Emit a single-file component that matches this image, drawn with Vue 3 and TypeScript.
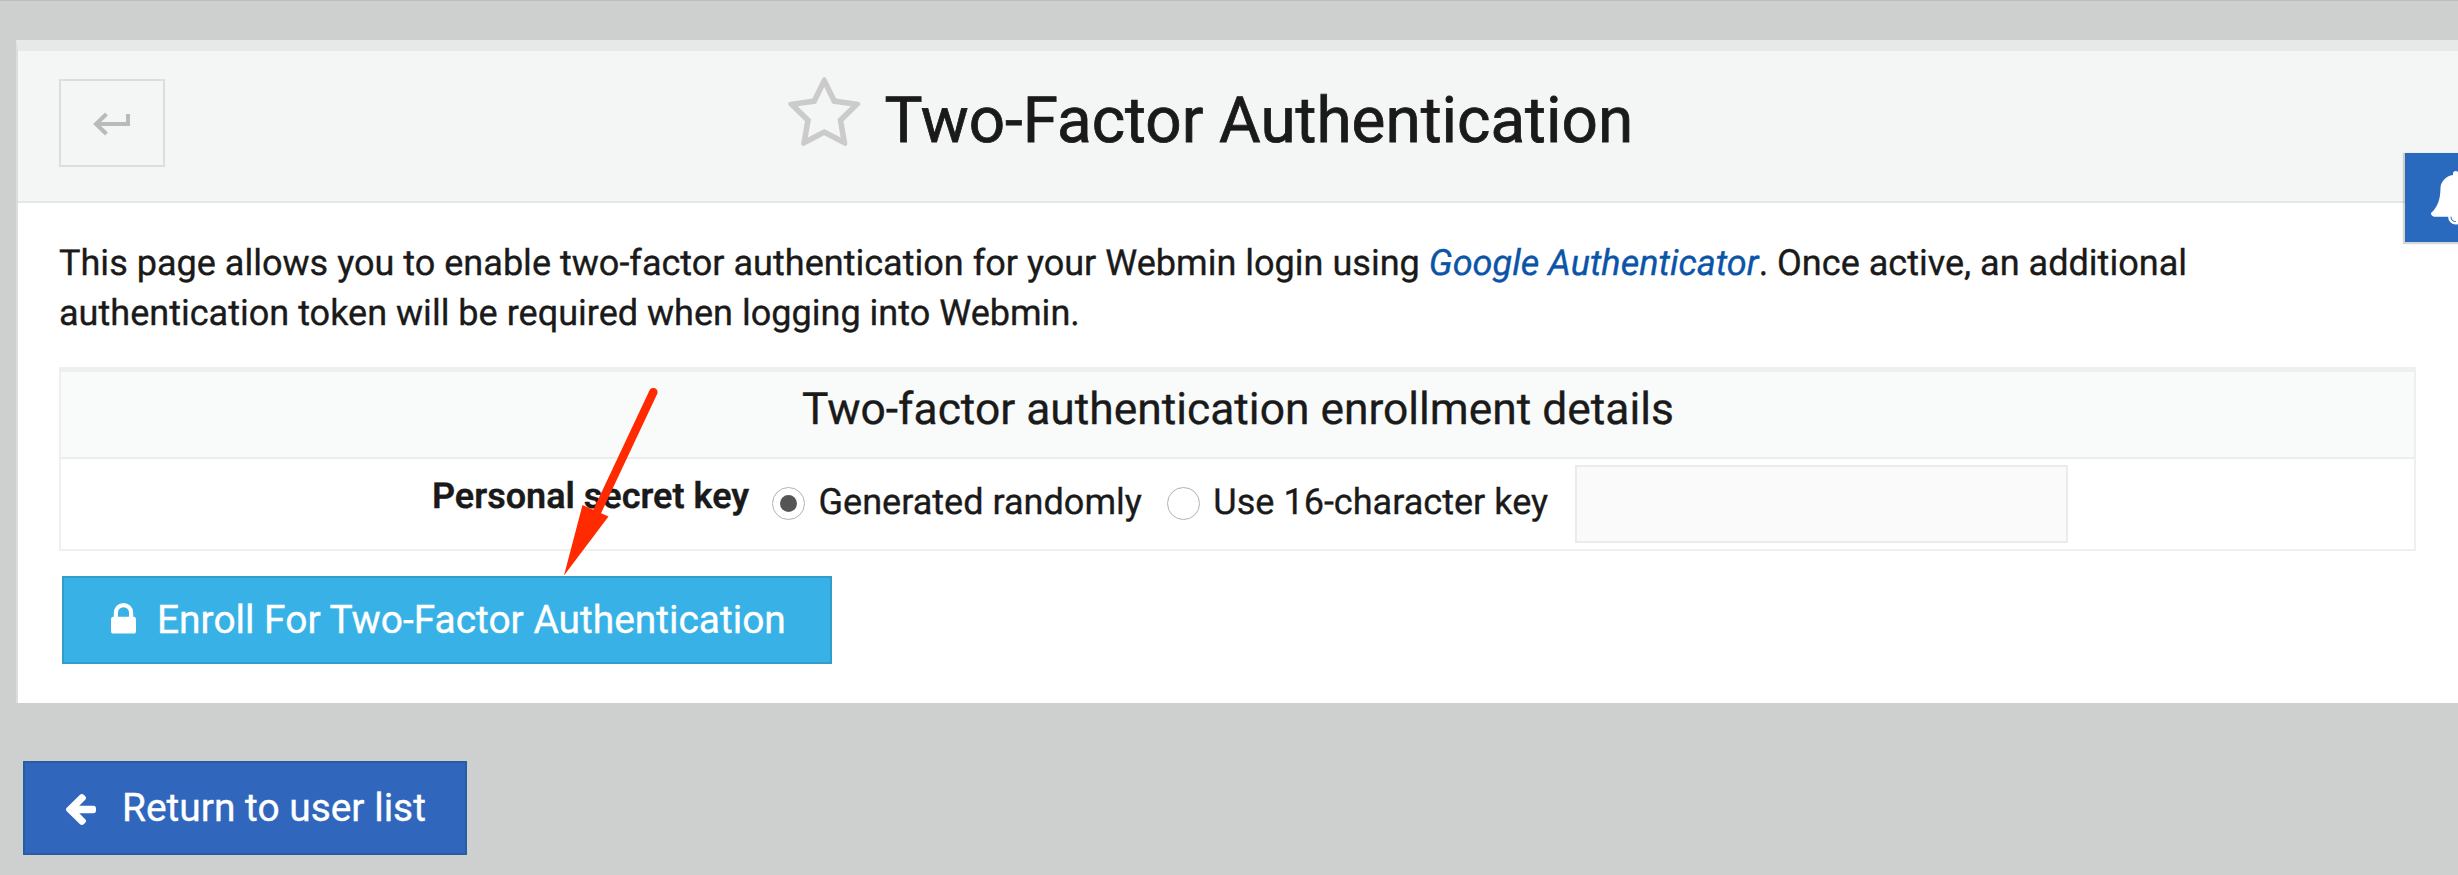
<script setup lang="ts">
import { ref } from 'vue'

type KeyMode = 'random' | 'custom'

const mode = ref<KeyMode>('random')
const secret = ref('')
const options: { value: KeyMode; label: string }[] = [
  { value: 'random', label: 'Generated randomly' },
  { value: 'custom', label: 'Use 16-character key' },
]
</script>

<template>
  <div class="page">
    <main class="panel">
      <header class="panel-head">
        <button class="back" type="button" aria-label="Back">
          <svg width="38" height="24" viewBox="0 0 38 24">
            <path d="M13.5 2 3 12l10.500 10M3 12h32V2" fill="none" stroke="#b9baba" stroke-width="4" />
          </svg>
        </button>
        <h1 class="title">
          <svg class="star" width="72.500" height="69" viewBox="64 32 1664 1587">
            <path d="M1201 1004l306-297-422-62-189-382-189 382-422 62 306 297-73 421 378-199 377 199zm527-357q0 22-26 48l-363 354 86 500q1 7 1 20 0 50-41 50-19 0-40-12l-449-236-449 236q-22 12-40 12-21 0-31.500-14.500t-10.500-35.500q0-6 2-20l86-500-364-354q-25-27-25-48 0-37 56-46l502-73 225-455q19-41 49-41t49 41l225 455 502 73q56 9 56 46z" fill="#cbcbcb" />
          </svg>
          <span>Two-Factor Authentication</span>
        </h1>
      </header>

      <section class="panel-body">
        <p class="intro">
          This page allows you to enable two-factor authentication for your Webmin login using
          <a class="link">Google Authenticator</a>. Once active, an additional<br />
          authentication token will be required when logging into Webmin.
        </p>

        <div class="details">
          <h2 class="details-head">Two-factor authentication enrollment details</h2>
          <div class="details-row">
            <span class="label">Personal secret key</span>
            <div class="choices">
              <label v-for="o in options" :key="o.value" class="choice">
                <input v-model="mode" class="native" type="radio" name="mode" :value="o.value" />
                <i class="dot" :class="{ on: mode === o.value }"></i>
                <span>{{ o.label }}</span>
              </label>
            </div>
            <input v-model="secret" class="key" type="text" />
          </div>
        </div>

        <button class="btn enroll" type="button">
          <svg width="25" height="30.500" viewBox="320 128 1152 1408">
            <path d="M640 768h512v-192q0-106-75-181t-181-75-181 75-75 181v192zm832 96v576q0 40-28 68t-68 28h-960q-40 0-68-28t-28-68v-576q0-40 28-68t68-28h32v-192q0-184 132-316t316-132 316 132 132 316v192h32q40 0 68 28t28 68z" fill="#fff" />
          </svg>
          <span>Enroll For Two-Factor Authentication</span>
        </button>
      </section>
    </main>

    <button class="btn return" type="button">
      <svg width="30" height="31" viewBox="192 181 1472 1558" preserveAspectRatio="none">
        <path d="M1664 896v128q0 53-32.500 90.500t-84.500 37.500h-704l293 294q38 36 38 90t-38 90l-75 76q-37 37-90 37-52 0-91-37l-651-652q-37-37-37-90 0-52 37-91l651-650q38-38 91-38 52 0 90 38l75 74q38 38 38 91t-38 91l-293 293h704q52 0 84.500 37.500t32.500 90.500z" fill="#fff" />
      </svg>
      <span>Return to user list</span>
    </button>

    <div class="notify">
      <svg width="53.500" height="53.500" viewBox="0 0 1792 1792">
        <path d="M912 1696q0-16-16-16-59 0-101.500-42.500t-42.500-101.500q0-16-16-16t-16 16q0 73 51.500 124.500t124.500 51.500q16 0 16-16zm816-288q0 52-38 90t-90 38h-448q0 106-75 181t-181 75-181-75-75-181h-448q-52 0-90-38t-38-90q50-42 91-88t85-119.500 74.500-158.500 50-206 19.500-260q0-152 117-282.500t307-158.500q-8-19-8-39 0-40 28-68t68-28 68 28 28 68q0 20-8 39 190 28 307 158.500t117 282.500q0 139 19.500 260t50 206 74.500 158.500 85 119.500 91 88z" fill="#fff" />
      </svg>
    </div>

    <svg class="pointer" width="100" height="190" viewBox="560 388 100 190">
      <path d="M653.300 392.200 596 514" stroke="#ff2a00" stroke-width="8.500" stroke-linecap="round" />
      <path d="M564 575.500 582.500 505l26 11.500z" fill="#ff2a00" />
    </svg>
  </div>
</template>

<style>
body {
  margin: 0;
  overflow: hidden;
}
</style>

<style scoped>
.page {
  position: relative;
  box-sizing: border-box;
  width: 2458px;
  height: 875px;
  padding-top: 39px;
  overflow: hidden;
  background: #ced0cf;
  border-top: 1px solid #bcbdbd;
  color: #1a1a1a;
  font-family: Roboto, "Liberation Sans", sans-serif;
  font-size: 36.05px;
  text-rendering: geometricPrecision;
  -webkit-text-stroke: 0.35px currentColor;
}
.panel {
  box-sizing: border-box;
  width: 2462px;
  height: 663px;
  margin-left: 16px;
  background: #fff;
  border-top: 11px solid #e8e8e8;
  border-left: 2px solid #dcdddc;
}
.panel-head {
  display: flex;
  box-sizing: border-box;
  height: 152px;
  padding: 28px 0 0 41px;
  background: #f4f6f5;
  border-bottom: 2px solid #e5e6e6;
}
.back {
  display: flex;
  align-items: center;
  justify-content: center;
  box-sizing: border-box;
  width: 106px;
  height: 88px;
  padding: 2px 0 0;
  background: transparent;
  border: 2.500px solid #dcdddd;
}
.title {
  display: flex;
  margin: -2px 0 0 623px;
  font-size: 63.8px;
  font-weight: 400;
  line-height: 88px;
  -webkit-text-stroke-width: 0.8px;
}
.star {
  margin-right: 24px;
}
.panel-body {
  padding: 35px 0 0 41px;
}
.intro {
  margin: 0;
  line-height: 50px;
}
.link {
  color: #0b54a8;
  font-style: italic;
}
.details {
  box-sizing: border-box;
  width: 2357px;
  height: 184px;
  margin-top: 29px;
  border: 2px solid #eeefef;
  border-top-width: 5px;
}
.details-head {
  box-sizing: border-box;
  height: 87px;
  margin: 0;
  padding-left: 741px;
  background: #f9fbfa;
  border-bottom: 2px solid #eceded;
  font-size: 44.35px;
  font-weight: 400;
  line-height: 75px;
}
.details-row {
  display: flex;
  height: 90px;
  padding-left: 371px;
}
.label {
  width: 340px;
  font-weight: 600;
  font-size: 36px;
  line-height: 75px;
}
.choices {
  display: flex;
  gap: 25px;
  width: 803px;
  line-height: 87px;
}
.choice {
  display: flex;
  align-items: center;
  height: 87px;
}
.native {
  display: none;
}
.dot {
  display: flex;
  align-items: center;
  justify-content: center;
  box-sizing: border-box;
  width: 33px;
  height: 33px;
  margin: 2px 13.500px 0 0;
  border: 1.500px solid #b2b2b2;
  border-radius: 50%;
}
.dot.on::after {
  width: 17px;
  height: 17px;
  background: #555;
  border-radius: 50%;
  content: "";
}
.key {
  box-sizing: border-box;
  width: 493px;
  height: 78px;
  margin-top: 6px;
  padding: 0 16px;
  background: #fafafa;
  border: 2.500px solid #ebebeb;
  outline: none;
  font: inherit;
}
.btn {
  display: flex;
  align-items: center;
  box-sizing: border-box;
  color: #fff;
  font-family: inherit;
  font-size: 38.9px;
  line-height: 46px;
  -webkit-text-stroke: 0.35px currentColor;
}
.enroll {
  width: 770px;
  height: 88px;
  margin: 25px 0 0 3px;
  padding: 0 0 0 47px;
  background: #38b2e6;
  border: 2px solid #319dca;
}
.enroll svg {
  margin: -3px 21px 0 0;
}
.return {
  width: 444px;
  height: 94px;
  margin: 58px 0 0 23px;
  padding: 0 0 0 41px;
  background: #3067bd;
  border: 2px solid #275e9f;
}
.return svg {
  margin: 2px 26px 0 0;
}
/* Notification tab hangs over the right edge of the panel. */
.notify {
  position: absolute;
  top: 152px;
  right: 0;
  display: flex;
  box-sizing: border-box;
  width: 53px;
  height: 89px;
  padding: 18px 0 0 24px;
  overflow: hidden;
  background: #296abf;
  box-shadow: -1px 1px 1px 1px rgba(0, 0, 0, 0.16);
}
.notify svg {
  flex: none;
}
.pointer {
  position: absolute;
  top: 387px;
  left: 560px;
}
</style>
